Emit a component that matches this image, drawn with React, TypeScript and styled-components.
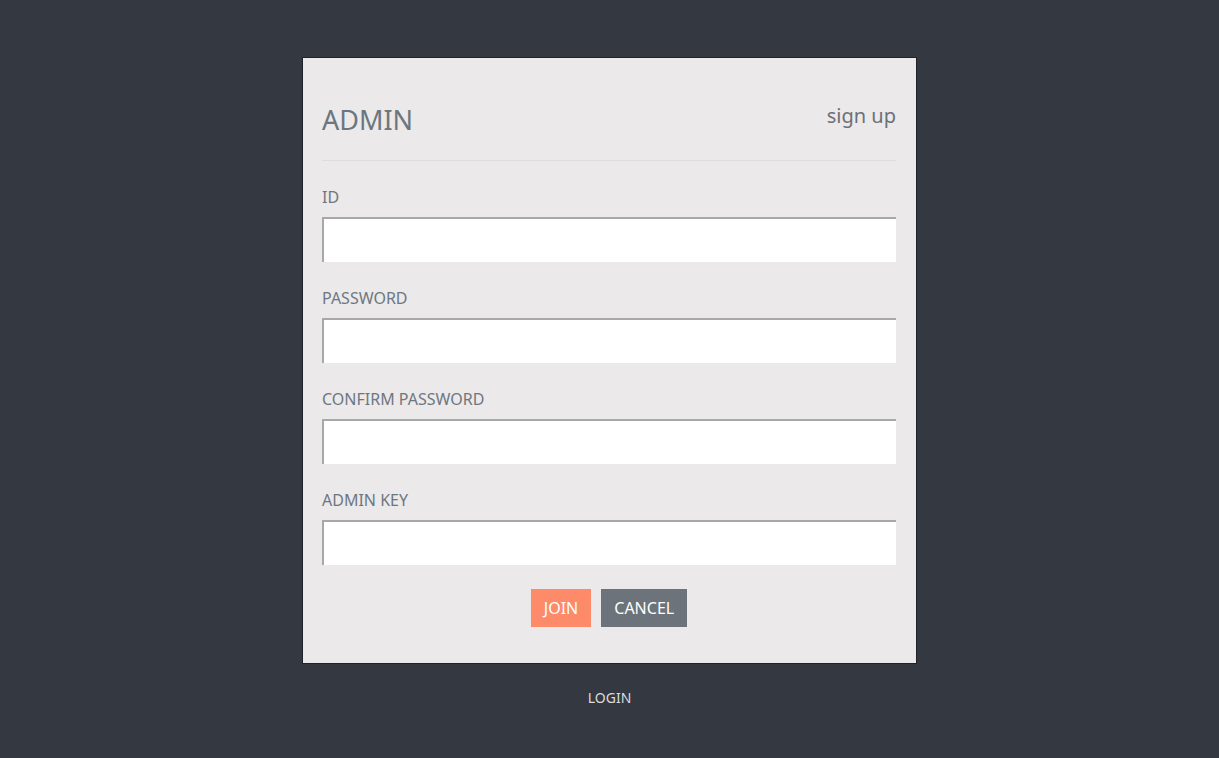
import React from "react";
import styled, { createGlobalStyle } from "styled-components";

const Global = createGlobalStyle`
  html, body { margin: 0; padding: 0; background: #343840; }
  body { font-family: "Noto Sans", "Open Sans", sans-serif; }
  * { box-sizing: border-box; }
`;

const Page = styled.div`
  min-height: 758px;
  display: flex;
  flex-direction: column;
  align-items: center;
  padding-top: 57px;
`;

const Card = styled.form`
  width: 615px;
  background: #ebe9e9;
  border: 1px solid #1f2226;
  padding: 0 20px 36px 19px;
  display: flex;
  flex-direction: column;
`;

const Header = styled.div`
  display: flex;
  justify-content: space-between;
  align-items: flex-start;
  padding: 44px 0 22px;
  border-bottom: 1px solid #dedcdc;
`;

const Title = styled.h1`
  margin: 0;
  font-size: 27px;
  line-height: 36px;
  font-weight: 400;
  color: #6b7680;
`;

const SignUp = styled.span`
  font-size: 20px;
  line-height: 28px;
  color: #6b7178;
`;

const Field = styled.label`
  display: flex;
  flex-direction: column;
  padding-top: 26px;
`;

const Label = styled.span`
  font-size: 16px;
  line-height: 20px;
  color: #6e7781;
  margin-bottom: 10px;
`;

const Input = styled.input`
  height: 45px;
  width: 100%;
  background: #fff;
  border: none;
  border-top: 2px solid #a8a8a8;
  border-left: 2px solid #a8a8a8;
  outline: none;
  font-size: 16px;
  padding: 0 10px;
`;

const Buttons = styled.div`
  display: flex;
  justify-content: center;
  gap: 10px;
  margin-top: 24px;
`;

const Button = styled.button<{ $variant: "primary" | "secondary" }>`
  height: 38px;
  padding: 0 13px;
  border: none;
  font-family: "Noto Sans", sans-serif;
  font-size: 16px;
  color: #fff;
  background: ${(p) => (p.$variant === "primary" ? "#fd8a68" : "#6c737b")};
  cursor: pointer;
`;

const LoginLink = styled.a`
  margin-top: 24px;
  font-size: 14px;
  line-height: 20px;
  color: #dcdcdc;
  text-decoration: none;
`;

const fields = [
  { label: "ID", type: "text" },
  { label: "PASSWORD", type: "password" },
  { label: "CONFIRM PASSWORD", type: "password" },
  { label: "ADMIN KEY", type: "text" },
];

export default function App() {
  return (
    <>
      <Global />
      <Page>
        <Card onSubmit={(e) => e.preventDefault()}>
          <Header>
            <Title>ADMIN</Title>
            <SignUp>sign up</SignUp>
          </Header>
          {fields.map((f) => (
            <Field key={f.label}>
              <Label>{f.label}</Label>
              <Input type={f.type} />
            </Field>
          ))}
          <Buttons>
            <Button $variant="primary" type="submit">JOIN</Button>
            <Button $variant="secondary" type="button">CANCEL</Button>
          </Buttons>
        </Card>
        <LoginLink href="#">LOGIN</LoginLink>
      </Page>
    </>
  );
}
